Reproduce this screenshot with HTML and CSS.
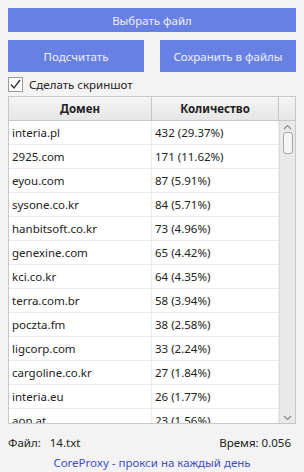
FILE: index.html
```html
<!DOCTYPE html>
<html lang="ru">
<head>
  <meta charset="UTF-8">
  <title>Домены</title>
  <link rel="stylesheet" href="styles.css">
</head>
<body>
  <div class="app">
    <button class="btn btn-wide">Выбрать файл</button>

    <div class="btn-row">
      <button class="btn btn-tall">Подсчитать</button>
      <button class="btn btn-tall">Сохранить в файлы</button>
    </div>

    <label class="check">
      <span class="check-box">
        <svg width="13" height="13" viewBox="0 0 13 13"><path d="M2 6.5 L5 10 L11 2" fill="none" stroke="#333" stroke-width="1.4"/></svg>
      </span>
      Сделать скриншот
    </label>

    <!-- Table with domains -->
    <div class="grid">
      <div class="grid-head">
        <div class="hcell">Домен</div>
        <div class="hcell">Количество</div>
        <div class="hcell hcell-sb"></div>
      </div>
      <div class="grid-body">
        <div class="rows">
          <div class="row"><div class="cell">interia.pl</div><div class="cell">432 (29.37%)</div></div>
          <div class="row"><div class="cell">2925.com</div><div class="cell">171 (11.62%)</div></div>
          <div class="row"><div class="cell">eyou.com</div><div class="cell">87 (5.91%)</div></div>
          <div class="row"><div class="cell">sysone.co.kr</div><div class="cell">84 (5.71%)</div></div>
          <div class="row"><div class="cell">hanbitsoft.co.kr</div><div class="cell">73 (4.96%)</div></div>
          <div class="row"><div class="cell">genexine.com</div><div class="cell">65 (4.42%)</div></div>
          <div class="row"><div class="cell">kci.co.kr</div><div class="cell">64 (4.35%)</div></div>
          <div class="row"><div class="cell">terra.com.br</div><div class="cell">58 (3.94%)</div></div>
          <div class="row"><div class="cell">poczta.fm</div><div class="cell">38 (2.58%)</div></div>
          <div class="row"><div class="cell">ligcorp.com</div><div class="cell">33 (2.24%)</div></div>
          <div class="row"><div class="cell">cargoline.co.kr</div><div class="cell">27 (1.84%)</div></div>
          <div class="row"><div class="cell">interia.eu</div><div class="cell">26 (1.77%)</div></div>
          <div class="row"><div class="cell">aon.at</div><div class="cell">23 (1.56%)</div></div>
        </div>
        <div class="scrollbar">
          <svg class="arrow" width="9" height="6" viewBox="0 0 9 6"><path d="M1 5 L4.5 1.5 L8 5" fill="none" stroke="#8a8a8a" stroke-width="1.2"/></svg>
          <div class="thumb"></div>
          <div class="track"></div>
          <svg class="arrow" width="9" height="6" viewBox="0 0 9 6"><path d="M1 1 L4.5 4.5 L8 1" fill="none" stroke="#8a8a8a" stroke-width="1.2"/></svg>
        </div>
      </div>
    </div>

    <div class="status">
      <div class="status-file"><span>Файл:</span><span>14.txt</span></div>
      <div>Время: 0.056</div>
    </div>
    <a class="promo" href="#">CoreProxy - прокси на каждый день</a>
  </div>
</body>
</html>
```

FILE: styles.css
```css
* {
  margin: 0;
  padding: 0;
  box-sizing: border-box;
}

body {
  font-family: "Noto Sans", "Open Sans", sans-serif;
  font-size: 11.5px;
  background-color: #f3f3f3;
  color: #222;
}

.app {
  padding: 8px 8px 0 8px;
  display: flex;
  flex-direction: column;
}

/* Buttons */
.btn {
  font-family: inherit;
  font-size: 11.5px;
  background-color: #6880e4;
  color: #eef0f8;
  border: none;
  cursor: pointer;
}

.btn-wide {
  height: 24px;
}

.btn-row {
  display: flex;
  gap: 16px;
  margin-top: 8px;
}

.btn-tall {
  flex: 1;
  height: 32px;
}

/* Checkbox */
.check {
  display: flex;
  align-items: center;
  gap: 6px;
  height: 16px;
  margin-top: 4px;
  color: #222;
}

.check-box {
  width: 15px;
  height: 15px;
  border: 1px solid #9a9a9a;
  background-color: #fff;
  display: flex;
  align-items: center;
  justify-content: center;
}

/* Grid */
.grid {
  margin-top: 4px;
  border: 1px solid #c8c8c8;
  background-color: #fff;
  display: flex;
  flex-direction: column;
}

.grid-head {
  display: grid;
  grid-template-columns: 143px 127px 1fr;
  height: 24px;
  border-bottom: 1px solid #c8c8c8;
  background: linear-gradient(#f5f5f5, #e6e6e6);
}

.hcell {
  font-weight: bold;
  text-align: center;
  line-height: 23px;
  border-right: 1px solid #c8c8c8;
  color: #222;
}

.hcell-sb {
  border-right: none;
}

.grid-body {
  display: flex;
  height: 302px;
  overflow: hidden;
}

.rows {
  width: 270px;
}

.row {
  display: grid;
  grid-template-columns: 143px 127px;
  height: 24px;
  border-bottom: 1px solid #ececec;
}

.cell {
  padding-left: 3px;
  line-height: 23px;
  border-right: 1px solid #ececec;
  white-space: nowrap;
}

/* Scrollbar */
.scrollbar {
  flex: 1;
  background-color: #e9e9e9;
  border-left: 1px solid #dcdcdc;
  display: flex;
  flex-direction: column;
  align-items: center;
  padding: 3px 0 2px 0;
}

.thumb {
  width: 10px;
  height: 22px;
  margin-top: 2px;
  border: 1px solid #a8a8a8;
  border-radius: 3px;
  background-color: #f4f4f4;
}

.track {
  flex: 1;
}

/* Footer */
.status {
  display: flex;
  justify-content: space-between;
  margin-top: 10px;
  height: 18px;
  line-height: 18px;
  padding-right: 5px;
}

.status-file {
  display: flex;
  gap: 9px;
}

.promo {
  display: block;
  text-align: center;
  margin-top: 2px;
  line-height: 18px;
  color: #3b4fc4;
  text-decoration: none;
}
```
